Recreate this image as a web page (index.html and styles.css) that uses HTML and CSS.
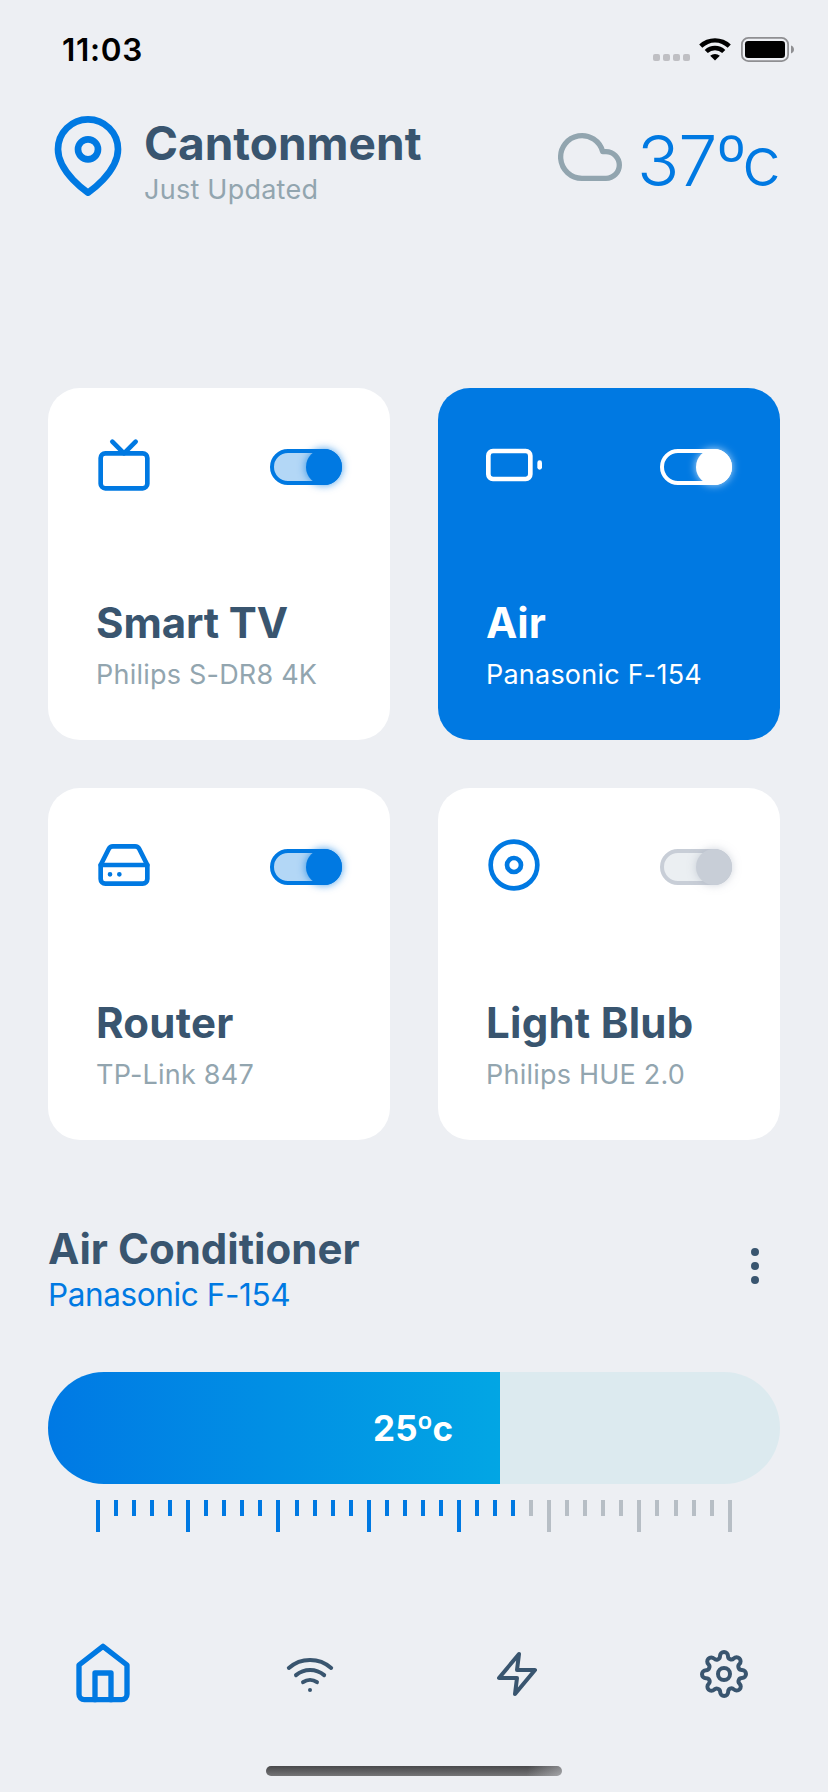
FILE: index.html
```
<!DOCTYPE html>
<html lang="en">
<head>
<meta charset="utf-8">
<title>Smart Home</title>
<link rel="stylesheet" href="styles.css">
</head>
<body>
<div class="screen">
  <div class="status">
    <span class="time">11:03</span>
    <div class="status-icons">
      <span class="signal"><i></i><i></i><i></i><i></i></span>
      <svg class="status-wifi" width="32" height="24" viewBox="0 0 32 24"><path d="M0.2 7.6A22.6 22.6 0 0 1 31.8 7.6L28.7 10.7A18.2 18.2 0 0 0 3.3 10.7Z"/><path d="M5.7 13A14.8 14.8 0 0 1 26.3 13L23.2 16.1A10.4 10.4 0 0 0 8.8 16.1Z"/><path d="M11.2 18.8A7.2 7.2 0 0 1 20.8 18.8L16 23.6Z"/></svg>
      <svg class="status-battery" width="54" height="26" viewBox="0 0 54 26"><rect x="0.9" y="0.9" width="46.2" height="23.2" rx="6.4" fill="none" stroke="#8f8f92" stroke-width="1.8"/><rect x="4" y="4" width="40" height="17" rx="3.2"/><path d="M50 8.5c1.8.6 3 2.200 3 4s-1.200 3.400-3 4z" fill="#8f8f92"/></svg>
    </div>
  </div>

  <header class="header">
    <svg class="icon pin" width="80" height="80" viewBox="0 0 24 24"><path d="M21 10c0 7-9 13-9 13s-9-6-9-13a9 9 0 0 1 18 0z"/><circle cx="12" cy="10" r="3"/></svg>
    <div class="place">
      <h1 class="place-name">Cantonment</h1>
      <p class="place-note">Just Updated</p>
    </div>
    <svg class="icon cloud" width="64" height="64" viewBox="0 0 24 24"><path d="M18 10h-1.260A8 8 0 1 0 9 20h9a5 5 0 0 0 0-10z"/></svg>
    <span class="temp">37<span class="deg">º</span>c</span>
  </header>

  <main class="cards">
    <section class="card">
      <div class="card-top">
        <svg class="icon" width="56" height="56" viewBox="0 0 24 24"><rect x="2" y="7" width="20" height="15" rx="2"/><path d="M17 2l-5 5-5-5"/></svg>
        <span class="toggle"><i class="knob"></i></span>
      </div>
      <h2 class="card-title snug">Smart TV</h2>
      <p class="card-sub">Philips S-DR8 4K</p>
    </section>
    <section class="card active">
      <div class="card-top">
        <svg class="icon" width="56" height="56" viewBox="0 0 24 24"><rect x="1" y="6" width="18" height="12" rx="2"/><path d="M23 13v-2"/></svg>
        <span class="toggle"><i class="knob"></i></span>
      </div>
      <h2 class="card-title snug">Air</h2>
      <p class="card-sub">Panasonic F-154</p>
    </section>
    <section class="card">
      <div class="card-top">
        <svg class="icon" width="56" height="56" viewBox="0 0 24 24"><path d="M22 12H2"/><path d="M5.450 5.110L2 12v6a2 2 0 0 0 2 2h16a2 2 0 0 0 2-2v-6l-3.450-6.890A2 2 0 0 0 16.760 4H7.240a2 2 0 0 0-1.790 1.110z"/><path d="M6 16h.01M10 16h.01"/></svg>
        <span class="toggle"><i class="knob"></i></span>
      </div>
      <h2 class="card-title">Router</h2>
      <p class="card-sub">TP-Link 847</p>
    </section>
    <section class="card">
      <div class="card-top">
        <svg class="icon" width="56" height="56" viewBox="0 0 24 24"><circle cx="12" cy="12" r="10"/><circle cx="12" cy="12" r="3"/></svg>
        <span class="toggle off"><i class="knob"></i></span>
      </div>
      <h2 class="card-title">Light Blub</h2>
      <p class="card-sub">Philips HUE 2.0</p>
    </section>
  </main>

  <section class="control">
    <div class="control-head">
      <div>
        <h2 class="control-title">Air Conditioner</h2>
        <p class="control-sub">Panasonic F-154</p>
      </div>
      <svg class="icon more" width="48" height="48" viewBox="0 0 24 24"><circle cx="12" cy="5" r="1"/><circle cx="12" cy="12" r="1"/><circle cx="12" cy="19" r="1"/></svg>
    </div>
    <div class="slider"><div class="fill"><span class="value">25<span class="deg">º</span>c</span></div></div>
    <div class="ruler"></div>
  </section>

  <nav class="nav">
    <svg class="icon home" width="64" height="64" viewBox="0 0 24 24"><path d="M3 9l9-7 9 7v11a2 2 0 0 1-2 2H5a2 2 0 0 1-2-2z"/><path d="M9 22V12h6v10"/></svg>
    <svg class="icon" width="48" height="48" viewBox="0 0 24 24"><path d="M5 12.550a11 11 0 0 1 14.080 0"/><path d="M1.420 9a16 16 0 0 1 21.160 0"/><path d="M8.530 16.110a6 6 0 0 1 6.950 0"/><path d="M12 20h.01"/></svg>
    <svg class="icon" width="48" height="48" viewBox="0 0 24 24"><path d="M13 2L3 14h9l-1 8 10-12h-9l1-8z"/></svg>
    <svg class="icon" width="48" height="48" viewBox="0 0 24 24"><circle cx="12" cy="12" r="3"/><path d="M19.400 15a1.650 1.650 0 0 0 .33 1.820l.06.06a2 2 0 0 1 0 2.830 2 2 0 0 1-2.830 0l-.06-.06a1.650 1.650 0 0 0-1.820-.33 1.650 1.650 0 0 0-1 1.510V21a2 2 0 0 1-2 2 2 2 0 0 1-2-2v-.09A1.650 1.650 0 0 0 9 19.400a1.650 1.650 0 0 0-1.820.33l-.06.06a2 2 0 0 1-2.830 0 2 2 0 0 1 0-2.830l.06-.06a1.650 1.650 0 0 0 .33-1.820 1.650 1.650 0 0 0-1.510-1H3a2 2 0 0 1-2-2 2 2 0 0 1 2-2h.09A1.650 1.650 0 0 0 4.600 9a1.650 1.650 0 0 0-.33-1.820l-.06-.06a2 2 0 0 1 0-2.830 2 2 0 0 1 2.830 0l.06.06a1.650 1.650 0 0 0 1.820.33H9a1.650 1.650 0 0 0 1-1.510V3a2 2 0 0 1 2-2 2 2 0 0 1 2 2v.09a1.650 1.650 0 0 0 1 1.510 1.650 1.650 0 0 0 1.820-.33l.06-.06a2 2 0 0 1 2.830 0 2 2 0 0 1 0 2.830l-.06.06a1.650 1.650 0 0 0-.33 1.820V9a1.650 1.650 0 0 0 1.510 1H21a2 2 0 0 1 2 2 2 2 0 0 1-2 2h-.09a1.650 1.650 0 0 0-1.510 1z"/></svg>
  </nav>
  <div class="home-indicator"></div>
</div>
<script src="ruler.js"></script>
</body>
</html>
```
FILE: styles.css
```
* { box-sizing: border-box; }
body { margin: 0; background: #edeff3; font-family: Inter, "Liberation Sans", sans-serif; }
h1, h2, p { margin: 0; white-space: nowrap; }
.screen { width: 828px; height: 1792px; display: flex; flex-direction: column; color: #39556f; overflow: hidden; }
.icon { display: block; flex: none; fill: none; stroke: currentColor; stroke-width: 2; stroke-linecap: round; stroke-linejoin: round; }

.status { height: 98px; padding: 2px 33px 0 62px; display: flex; align-items: center; justify-content: space-between; color: #000; }
.time { font-size: 31.500px; font-weight: 600; line-height: 40px; letter-spacing: .7px; }
.status-icons { display: flex; align-items: flex-start; height: 26px; }
.signal { display: flex; gap: 3px; margin: 17px 9px 0 0; }
.signal i { width: 7px; height: 7px; border-radius: 2px; background: #bfbfc3; }
.status-wifi { margin-right: 10px; }

.header { height: 290px; padding: 18px 48px 0; display: flex; align-items: flex-start; }
.pin { color: #0079e2; }
.place { margin: -1px auto 0 16px; }
.place-name { font-size: 46px; line-height: 56px; font-weight: 700; }
.place-note { font-size: 27px; line-height: 34px; margin-top: 2px; font-weight: 400; letter-spacing: .25px; color: #92a5af; }
.cloud { color: #92a5af; margin: 9px 15px 0 0; }
.temp { color: #0079e2; font-size: 70px; line-height: 84px; font-weight: 300; letter-spacing: -1.200px; margin: 3px 0 0 0; }
.temp .deg { margin: 0 -3px 0 0; }

.cards { display: grid; grid-template-columns: 342px 342px; grid-auto-rows: 352px; gap: 48px; padding: 0 48px; }
.card { background: #fff; border-radius: 32px; padding: 49px 48px 0; }
.card-top { display: flex; align-items: flex-start; justify-content: space-between; height: 160px; color: #0079e2; }
.card-title { font-size: 42px; line-height: 52px; font-weight: 700; letter-spacing: .25px; }
.card-title.snug { letter-spacing: -.1px; }
.card-sub { font-size: 27px; line-height: 34px; margin-top: 9px; font-weight: 400; letter-spacing: .22px; color: #92a5af; }
.toggle { width: 72px; height: 36px; margin-top: 12px; border: 4px solid #0079e2; border-radius: 18px; background: #b3d7f6; display: flex; justify-content: flex-end; }
.knob { flex: none; width: 36px; height: 36px; margin: -4px -4px 0 0; border-radius: 50%; background: #0079e2; box-shadow: 0 0 8px rgba(0, 121, 226, .75); }
.active { background: #0079e2; color: #fff; }
.active .card-top, .active .card-sub { color: #fff; }
.active .toggle { background: transparent; border-color: #fff; }
.active .knob { background: #fff; box-shadow: 0 0 8px rgba(255, 255, 255, .75); }
.toggle.off { background: #ebeff2; border-color: #c8ced7; }
.off .knob { background: #c8ced7; box-shadow: 0 0 8px rgba(160, 170, 185, .5); }

.control { padding: 83px 48px 0; height: 484px; }
.control-head { display: flex; justify-content: space-between; height: 149px; }
.control-title { font-size: 42px; line-height: 52px; font-weight: 700; }
.control-sub { font-size: 31.500px; line-height: 40px; font-weight: 400; letter-spacing: -.4px; color: #0079e2; }
.more { margin: 19px 1px 0 0; }
.slider { height: 112px; border-radius: 56px; background: #dceaef; overflow: hidden; }
.fill { width: 452px; height: 112px; padding-right: 47px; display: flex; align-items: center; justify-content: flex-end; background: linear-gradient(90deg, #0079e4, #02a6e4); }
.value { color: #fff; font-size: 35px; font-weight: 700; line-height: 44px; }
.value .deg { margin: 0 -1px; }
.ruler { display: flex; justify-content: space-between; padding: 0 48px; margin-top: 16px; }
.tick { width: 4px; height: 16px; background: #b7bec5; }
.tick.major { height: 32px; }
.tick.on { background: #0079e2; }

.nav { height: 142px; padding-top: 17px; display: grid; grid-template-columns: repeat(4, 1fr); justify-items: center; align-items: start; }
.nav .icon { margin: 9px 1px 0 0; }
.nav .home { color: #0079e2; margin-top: 0; }
.home-indicator { width: 296px; height: 10px; margin: 0 auto; border-radius: 5px; background: linear-gradient(100deg, transparent 88%, rgba(237, 239, 244, .4)), linear-gradient(#48484a, #747476); }
```
FILE: ruler.js
```
const ruler = document.querySelector('.ruler');
for (let i = 0; i < 36; i++) {
  const tick = document.createElement('span');
  tick.className = 'tick' + (i % 5 === 0 ? ' major' : '') + (i < 24 ? ' on' : '');
  ruler.appendChild(tick);
}
```
